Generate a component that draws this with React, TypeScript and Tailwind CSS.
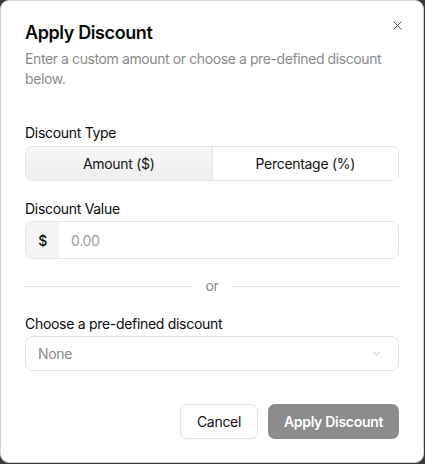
import { X, ChevronDown } from "lucide-react";

export default function App() {
  return (
    <div
      className="h-[464px] w-[425px] bg-[#3a3a3a] tracking-[-0.3px]"
      style={{ fontFamily: "Inter, 'Noto Sans', sans-serif" }}
    >
      <div className="relative h-[463px] w-[424px] rounded-[9px] border border-[#d4d4d4] bg-white px-6 pt-[18px] text-[#0a0a0a]">
        {/* Close */}
        <button className="absolute right-[18px] top-[17px] text-[#555]">
          <X size={15} strokeWidth={1.6} />
        </button>

        {/* Header */}
        <h2 className="text-[18px] font-semibold leading-[28px] tracking-[-0.4px]">
          Apply Discount
        </h2>
        <p className="mt-[2px] text-[14px] leading-[20px] tracking-[-0.4px] text-[#8a8a8a]">
          Enter a custom amount or choose a pre-defined discount below.
        </p>

        {/* Discount type */}
        <div className="mt-[34px] text-[14px] leading-[20px]">Discount Type</div>
        <div className="mt-[3px] flex h-[35px] overflow-hidden rounded-[7px] border border-[#e5e5e5] text-[14px]">
          <button className="flex-1 border-r border-[#e5e5e5] bg-gradient-to-b from-[#f7f7f8] to-[#eeeef0] text-[#111]">
            Amount ($)
          </button>
          <button className="flex-1 bg-white text-[#111]">Percentage (%)</button>
        </div>

        {/* Discount value */}
        <div className="mt-[18px] text-[14px] leading-[20px]">Discount Value</div>
        <div className="mt-[2px] flex h-[38px] overflow-hidden rounded-[7px] border border-[#e5e5e5] text-[14px]">
          <div className="flex w-[33px] items-center justify-center bg-[#f4f4f5] font-medium text-[#111]">
            $
          </div>
          <input
            className="flex-1 bg-white pl-[12px] text-[14px] text-[#111] outline-none placeholder:text-[#9a9a9a]"
            placeholder="0.00"
          />
        </div>

        {/* Separator */}
        <div className="mt-[17px] flex items-center gap-3">
          <div className="h-px flex-1 bg-[#e5e5e5]" />
          <span className="text-[14px] leading-[20px] text-[#8a8a8a]">or</span>
          <div className="h-px flex-1 bg-[#e5e5e5]" />
        </div>

        {/* Pre-defined */}
        <div className="mt-[18px] text-[14px] leading-[20px]">
          Choose a pre-defined discount
        </div>
        <button className="mt-[2px] flex h-[35px] w-full items-center justify-between rounded-[7px] border border-[#e5e5e5] bg-white pl-[12px] pr-[15px] text-[14px] text-[#8a8a8a]">
          <span>None</span>
          <ChevronDown size={13} strokeWidth={1.4} className="text-[#b5b5b5]" />
        </button>

        {/* Footer */}
        <div className="mt-[33px] flex justify-end gap-[10px]">
          <button className="h-[35px] w-[78px] rounded-[7px] border border-[#e5e5e5] bg-white text-[14px] text-[#111] shadow-[0_1px_2px_rgba(0,0,0,0.04)]">
            Cancel
          </button>
          <button className="h-[35px] w-[131px] rounded-[7px] bg-[#8c8c8c] text-[14px] font-semibold text-white">
            Apply Discount
          </button>
        </div>
      </div>
    </div>
  );
}
